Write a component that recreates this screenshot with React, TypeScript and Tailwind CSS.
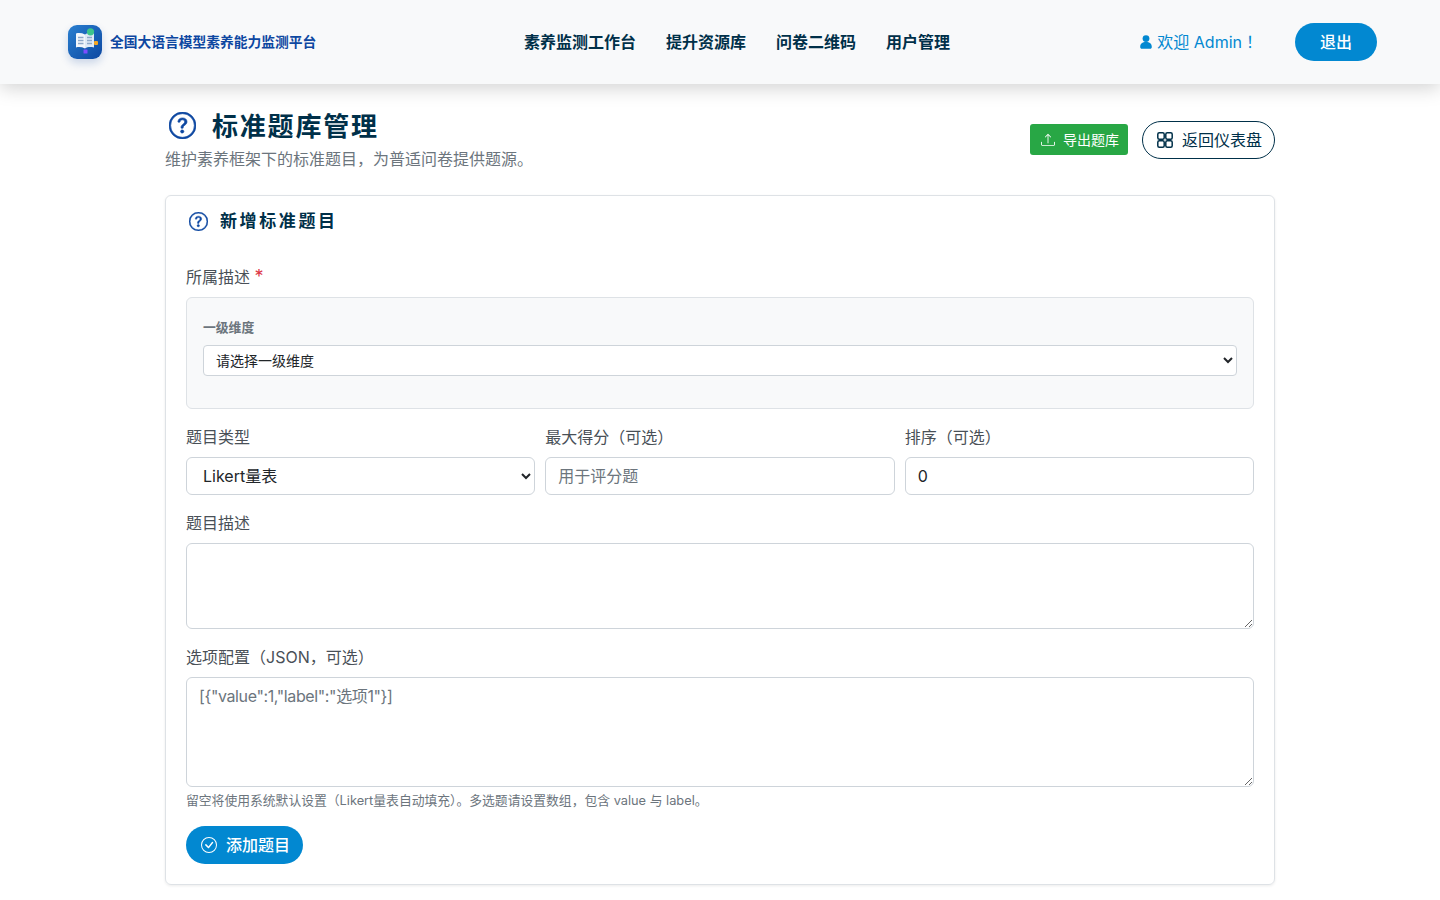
const FONT = "font-['Inter','Noto_Sans_CJK_SC',sans-serif]";

function HelpIcon({ size, className = "" }: { size: number; className?: string }) {
  return (
    <svg className={className} width={size} height={size} viewBox="0 0 16 16" fill="#0d47a1" stroke="#0d47a1" strokeWidth="0.35">
      <path d="M8 15A7 7 0 1 1 8 1a7 7 0 0 1 0 14zm0 1A8 8 0 1 0 8 0a8 8 0 0 0 0 16z" />
      <path d="M5.255 5.786a.237.237 0 0 0 .241.247h.825c.138 0 .248-.113.266-.25.09-.656.54-1.134 1.342-1.134.686 0 1.314.343 1.314 1.168 0 .635-.374.927-.965 1.371-.673.489-1.206 1.06-1.168 1.987l.003.217a.25.25 0 0 0 .25.246h.811a.25.25 0 0 0 .25-.25v-.105c0-.718.273-.927 1.01-1.486.609-.463 1.244-.977 1.244-2.056 0-1.511-1.276-2.241-2.673-2.241-1.267 0-2.655.59-2.75 2.286zm1.557 5.763c0 .533.425.927 1.01.927.609 0 1.028-.394 1.028-.927 0-.552-.42-.94-1.029-.94-.584 0-1.009.388-1.009.94z" />
    </svg>
  );
}

function Logo() {
  return (
    <div className="w-[34px] h-[34px] rounded-[9px] bg-gradient-to-br from-[#2a7fd0] to-[#0d47a1] shadow-[0_4px_8px_rgba(13,71,161,0.2)] shrink-0">
      <svg width="34" height="34" viewBox="0 0 34 34">
        <path d="M8 8.500c3-.8 6-.5 9 1v14c-3-1.500-6-1.800-9-1z" fill="#f2f6fb" />
        <path d="M17 9.500c2.500-1.500 5-1.800 9-1v14c-4-.8-6.500-.5-9 1z" fill="#dfeaf6" />
        <path d="M10 12.500h5.500M10 15.500h5.500M10 18.500h5.500M19 12.500h5M19 15.500h5M19 18.500h5" stroke="#8fa9c9" strokeWidth="1.300" />
        <circle cx="22.500" cy="6.800" r="3.600" fill="#3cc48c" />
        <rect x="26" y="16" width="4" height="4" rx="1" fill="#f5a623" />
        <rect x="15.500" y="24.500" width="4" height="4" rx="0.500" fill="#7c4dff" />
      </svg>
    </div>
  );
}

function Label({ children, className = "" }: { children: React.ReactNode; className?: string }) {
  return <label className={`block text-[16px] leading-[24px] text-[#495057] mb-2 ${className}`}>{children}</label>;
}

const inputClass =
  "block w-full border border-[#ced4da] rounded-[6px] bg-white text-[16px] leading-[24px] text-[#212529] px-3 outline-none";

export default function App() {
  return (
    <div className={`min-h-screen bg-white ${FONT}`}>
      <header className="h-[84px] bg-[#f8f9fa] shadow-[0_4px_18px_rgba(0,0,0,0.18)] flex items-center pl-[68px] pr-[63px] relative">
        <div className="flex items-center gap-2 w-[456px]">
          <Logo />
          <span className="text-[13.750px] font-semibold text-[#0d47a1]">全国大语言模型素养能力监测平台</span>
        </div>
        <nav className="flex items-center gap-[30px] text-[16px] font-semibold text-[#003049]">
          <a>素养监测工作台</a>
          <a>提升资源库</a>
          <a>问卷二维码</a>
          <a>用户管理</a>
        </nav>
        <div className="ml-auto flex items-center gap-[37px]">
          <span className="flex items-center gap-[5px] text-[16px] leading-[24px] text-[#0288d1]">
            <svg width="12" height="14" viewBox="0 0 12 14" fill="#0288d1">
              <circle cx="6" cy="3.600" r="3.400" />
              <path d="M0.200 12c0-3.200 2-5 5.800-5s5.800 1.800 5.800 5c0 1.200-.7 1.800-1.700 1.800H1.900c-1 0-1.700-.6-1.700-1.800z" />
            </svg>
            <span>
              欢迎 Admin<span className="font-['Noto_Sans_CJK_TC',sans-serif] leading-none">！</span>
            </span>
          </span>
          <button className="w-[82px] h-[38px] rounded-full bg-[#0288d1] text-white text-[16px] font-medium">退出</button>
        </div>
      </header>

      <main className="w-[1110px] mx-auto">
        <div className="flex items-center justify-between pt-[23px] mb-[24px]">
          <div>
            <h1 className="flex items-center gap-[16px] pl-[4px] h-[38px] mb-[2px] text-[26px] font-semibold tracking-[1.800px] text-[#003049]">
              <HelpIcon size={27} className="-mt-[1px]" />
              标准题库管理
            </h1>
            <p className="text-[16px] leading-[24px] text-[#6c757d]">维护素养框架下的标准题目，为普适问卷提供题源。</p>
          </div>
          <div className="flex items-center gap-[14px] pt-[2px]">
            <button className="flex items-center gap-[8px] h-[31px] w-[98px] pl-[11px] mb-[1px] rounded-[3px] bg-[#28a745] text-white text-[14px]">
              <svg width="14" height="14" viewBox="0 0 16 16" fill="#fff">
                <path d="M.5 9.900a.5.500 0 0 1 .5.500v2.500a1 1 0 0 0 1 1h12a1 1 0 0 0 1-1v-2.500a.5.500 0 0 1 1 0v2.500a2 2 0 0 1-2 2H2a2 2 0 0 1-2-2v-2.500a.5.500 0 0 1 .5-.5z" />
                <path d="M7.646 1.146a.5.500 0 0 1 .708 0l3 3a.5.500 0 0 1-.708.708L8.500 2.707V11.500a.5.500 0 0 1-1 0V2.707L5.354 4.854a.5.500 0 1 1-.708-.708l3-3z" />
              </svg>
              导出题库
            </button>
            <button className="flex items-center gap-[9px] h-[38px] w-[133px] pl-[14px] rounded-full border border-[#003049] text-[#003049] text-[16px]">
              <svg width="16" height="16" viewBox="0 0 16 16" fill="none" stroke="#003049" strokeWidth="1.500">
                <rect x="0.800" y="0.800" width="6.400" height="6.400" rx="1.500" />
                <rect x="8.800" y="0.800" width="6.400" height="6.400" rx="1.500" />
                <rect x="0.800" y="8.800" width="6.400" height="6.400" rx="1.500" />
                <rect x="8.800" y="8.800" width="6.400" height="6.400" rx="1.500" />
              </svg>
              返回仪表盘
            </button>
          </div>
        </div>

        <section className="border border-[#dee2e6] rounded-[6px] shadow-[0_1px_3px_rgba(0,0,0,0.08)] px-5 pb-5">
          <h2 className="flex items-center gap-[12px] h-[52px] pl-[3px] text-[17px] font-semibold tracking-[2.600px] text-[#003049]">
            <HelpIcon size={19} className="-mt-[2px]" />
            新增标准题目
          </h2>
          <div className="pt-[17px]">
            <Label>
              所属描述 <span className="text-[18px] leading-none text-[#dc3545]">*</span>
            </Label>
            <div className="bg-[#f8f9fa] border border-[#dee2e6] rounded-[6px] h-[112px] px-4 pt-[20px] mb-[16px]">
              <div className="text-[12.800px] leading-[20px] font-semibold text-[#6c757d] mb-[7px]">一级维度</div>
              <select className="block w-full h-[31px] border border-[#ced4da] rounded-[4px] bg-white text-[14px] text-[#212529] pl-[8px] outline-none">
                <option>请选择一级维度</option>
              </select>
            </div>

            <div className="grid grid-cols-3 gap-[10px] mb-[16px]">
              <div>
                <Label>题目类型</Label>
                <select className={`${inputClass} h-[38px] !px-[12px]`}>
                  <option>Likert量表</option>
                </select>
              </div>
              <div>
                <Label>最大得分（可选）</Label>
                <input className={`${inputClass} h-[38px] placeholder:text-[#6c757d]`} placeholder="用于评分题" />
              </div>
              <div>
                <Label>排序（可选）</Label>
                <input className={`${inputClass} h-[38px]`} defaultValue="0" />
              </div>
            </div>

            <Label>题目描述</Label>
            <textarea className={`${inputClass} h-[86px] py-[6px] mb-[16px]`} />

            <Label>选项配置（JSON，可选）</Label>
            <textarea
              className={`${inputClass} h-[110px] py-[6px] tracking-[-0.380px] placeholder:text-[#6c757d]`}
              placeholder={'[{"value":1,"label":"选项1"}]'}
            />
            <p className="text-[12.800px] leading-[18px] text-[#6c757d] mt-[5px]">
              留空将使用系统默认设置（Likert量表自动填充）。多选题请设置数组，包含 value 与 label。
            </p>
            <button className="mt-[16px] flex items-center gap-[9px] h-[38px] w-[117px] pl-[15px] rounded-full bg-[#0288d1] text-white text-[16px] font-medium">
              <svg width="16" height="16" viewBox="0 0 16 16" fill="#fff">
                <path d="M8 15A7 7 0 1 1 8 1a7 7 0 0 1 0 14zm0 1A8 8 0 1 0 8 0a8 8 0 0 0 0 16z" />
                <path d="M10.970 4.970a.235.235 0 0 0-.02.022L7.477 9.417 5.384 7.323a.750.750 0 0 0-1.060 1.060L6.970 11.030a.750.750 0 0 0 1.079-.02l3.992-4.990a.750.750 0 0 0-1.071-1.050z" />
              </svg>
              添加题目
            </button>
          </div>
        </section>
        <div className="h-[40px]" />
      </main>
    </div>
  );
}
